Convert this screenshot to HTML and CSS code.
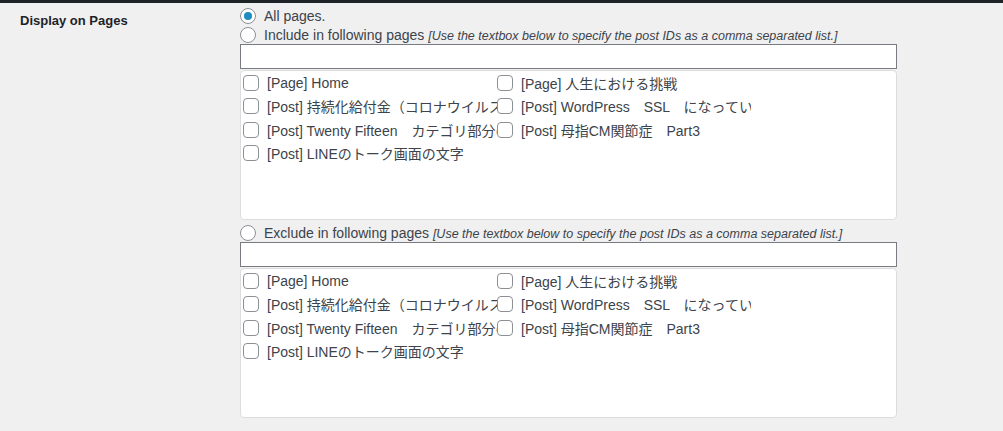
FILE: index.html
```html
<!DOCTYPE html>
<html lang="ja">
<head>
  <title>Display on Pages</title>
  <meta charset="UTF-8" />
  <meta name="viewport" content="width=device-width" />
  <link rel="stylesheet" href="styles.css">
</head>
<body>
  <div class="top-bar"></div>
  <div class="form-row">
    <div class="row-label">Display on Pages</div>
    <div class="row-field">
      <label class="radio-line">
        <input type="radio" name="display" value="all" checked>
        <span>All pages.</span>
      </label>

      <label class="radio-line">
        <input type="radio" name="display" value="include">
        <span>Include in following pages <em class="note">[Use the textbox below to specify the post IDs as a comma separated list.]</em></span>
      </label>
      <input type="text" class="ids-input">
      <div class="post-list">
        <label class="post-item"><input type="checkbox"><span>[Page] Home</span></label>
        <label class="post-item"><input type="checkbox"><span>[Page] 人生における挑戦</span></label>
        <label class="post-item"><input type="checkbox"><span>[Post] 持続化給付金（コロナウイルス）の申請方法</span></label>
        <label class="post-item"><input type="checkbox"><span>[Post] WordPress　SSL　になっていない</span></label>
        <label class="post-item"><input type="checkbox"><span>[Post] Twenty Fifteen　カテゴリ部分の表示</span></label>
        <label class="post-item"><input type="checkbox"><span>[Post] 母指CM関節症　Part3</span></label>
        <label class="post-item"><input type="checkbox"><span>[Post] LINEのトーク画面の文字</span></label>
      </div>

      <label class="radio-line exclude">
        <input type="radio" name="display" value="exclude">
        <span>Exclude in following pages <em class="note">[Use the textbox below to specify the post IDs as a comma separated list.]</em></span>
      </label>
      <input type="text" class="ids-input">
      <div class="post-list">
        <label class="post-item"><input type="checkbox"><span>[Page] Home</span></label>
        <label class="post-item"><input type="checkbox"><span>[Page] 人生における挑戦</span></label>
        <label class="post-item"><input type="checkbox"><span>[Post] 持続化給付金（コロナウイルス）の申請方法</span></label>
        <label class="post-item"><input type="checkbox"><span>[Post] WordPress　SSL　になっていない</span></label>
        <label class="post-item"><input type="checkbox"><span>[Post] Twenty Fifteen　カテゴリ部分の表示</span></label>
        <label class="post-item"><input type="checkbox"><span>[Post] 母指CM関節症　Part3</span></label>
        <label class="post-item"><input type="checkbox"><span>[Post] LINEのトーク画面の文字</span></label>
      </div>
    </div>
  </div>
</body>
</html>
```

FILE: styles.css
```css
body {
  margin: 0;
  background-color: #f0f0f1;
  color: #3c434a;
  font-family: "Liberation Sans", "Noto Sans CJK JP", sans-serif;
  font-size: 14px;
}

.top-bar {
  height: 3px;
  background-color: #1d2327;
}

.form-row {
  display: flex;
  align-items: flex-start;
}

.row-label {
  width: 240px;
  flex-shrink: 0;
  box-sizing: border-box;
  padding: 10px 0 0 20px;
  color: #1d2327;
  font-size: 13px;
  font-weight: bold;
}

.row-field {
  width: 657px;
  display: flex;
  flex-direction: column;
  padding-top: 3px;
}

.radio-line {
  display: flex;
  align-items: center;
  height: 19px;
  white-space: nowrap;
}

.radio-line.exclude {
  margin-top: 3px;
}

.note {
  font-size: 12.5px;
}

input[type="radio"] {
  appearance: none;
  width: 16px;
  height: 16px;
  margin: 0 8px 0 0;
  border: 1px solid #8c8f94;
  border-radius: 50%;
  background-color: #fff;
  box-sizing: border-box;
  display: flex;
  align-items: center;
  justify-content: center;
  flex-shrink: 0;
}

input[type="radio"]:checked::before {
  content: "";
  width: 8px;
  height: 8px;
  border-radius: 50%;
  background-color: #1e8cbe;
}

.ids-input {
  height: 25px;
  margin: 0;
  box-sizing: border-box;
  border: 1px solid #787c82;
  border-radius: 0;
  background-color: #fff;
}

.post-list {
  height: 150px;
  margin-top: 1px;
  box-sizing: border-box;
  padding: 0 2px;
  border: 1px solid #dcdcde;
  border-radius: 4px;
  background-color: #fff;
  display: flex;
  flex-wrap: wrap;
  align-content: flex-start;
}

.post-item {
  width: 254px;
  height: 23.5px;
  display: flex;
  align-items: center;
  overflow: hidden;
  white-space: nowrap;
}

input[type="checkbox"] {
  appearance: none;
  width: 16px;
  height: 16px;
  margin: 0 8px 0 0;
  border: 1px solid #8c8f94;
  border-radius: 4px;
  background-color: #fff;
  box-sizing: border-box;
  flex-shrink: 0;
}
```
